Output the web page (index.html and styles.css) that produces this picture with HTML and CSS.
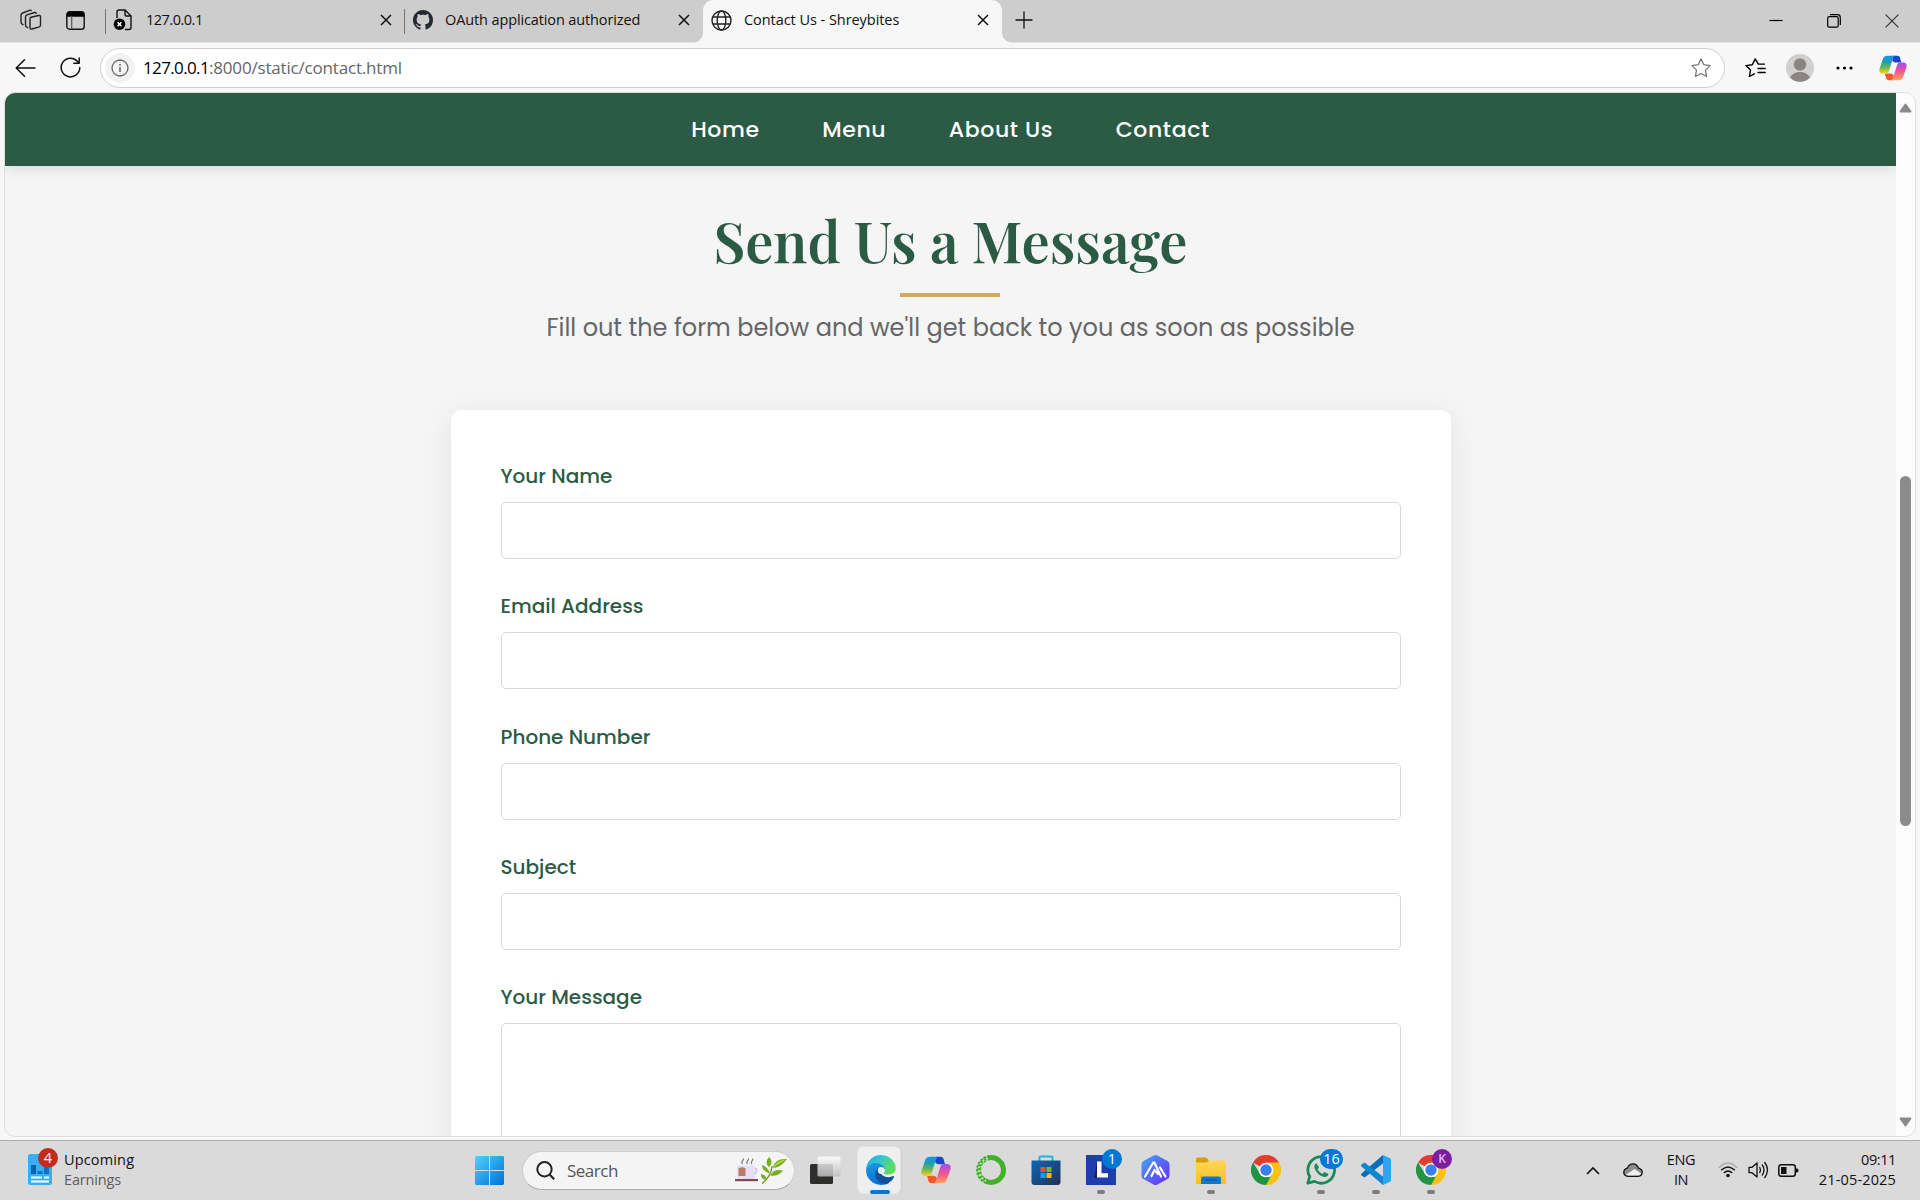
FILE: index.html
```html
<!DOCTYPE html>
<html lang="en">
<head>
<meta charset="utf-8">
<title>Contact Us - Shreybites</title>
<link rel="stylesheet" href="styles.css">
</head>
<body>
<svg class="defs" width="0" height="0" aria-hidden="true">
  <defs>
    <linearGradient id="copA" x1="0" y1="0" x2="0" y2="1"><stop offset="0" stop-color="#1593e8"/><stop offset=".35" stop-color="#1f9fb4"/><stop offset=".65" stop-color="#6db54f"/><stop offset="1" stop-color="#ffd21f"/></linearGradient>
    <linearGradient id="copB" x1="0" y1="0" x2="0" y2="1"><stop offset="0" stop-color="#a24ef0"/><stop offset=".5" stop-color="#ee5591"/><stop offset="1" stop-color="#ffa45c"/></linearGradient>
    <linearGradient id="edgeTop" x1="0" y1="0" x2="1" y2=".5"><stop offset="0" stop-color="#1f9fe8"/><stop offset=".45" stop-color="#34c6d3"/><stop offset="1" stop-color="#62dc57"/></linearGradient>
    <linearGradient id="edgeLeft" x1="0" y1="0" x2=".4" y2="1"><stop offset="0" stop-color="#1b9de2"/><stop offset="1" stop-color="#0a6fd0"/></linearGradient>
    <linearGradient id="win" gradientUnits="userSpaceOnUse" x1="0" y1="0" x2="29" y2="29"><stop offset="0" stop-color="#4fd1ff"/><stop offset="1" stop-color="#0070d6"/></linearGradient>
    <linearGradient id="store" x1="0" y1="0" x2="1" y2="1"><stop offset="0" stop-color="#0b68b4"/><stop offset="1" stop-color="#24305a"/></linearGradient>
    <linearGradient id="hex" x1="0" y1="0" x2="1" y2="1"><stop offset="0" stop-color="#45a5f4"/><stop offset="1" stop-color="#6a2bf0"/></linearGradient>
    <linearGradient id="folder" x1="0" y1="0" x2="0" y2="1"><stop offset="0" stop-color="#ffd75a"/><stop offset="1" stop-color="#fbbf1e"/></linearGradient>
    <linearGradient id="pane" x1="0" y1="0" x2="0" y2="1"><stop offset="0" stop-color="#fff"/><stop offset="1" stop-color="#bdbdbd"/></linearGradient>
    <symbol id="copilot" viewBox="0 0 30 28">
      <path fill="#1d44c8" d="M15 .8h4.400c2 0 2.800.9 3.300 2.600L24 8.200h-4.500c-3 0-5-.5-5.500-3Z"/>
      <path fill="#f4592c" d="M15 27.200h-4.400c-2 0-2.800-.9-3.300-2.600L6 19.800h4.500c3 0 5 .5 5.500 3Z"/>
      <path fill="url(#copA)" d="M9.500.8h8c-1.600.6-2.200 1.700-2.800 3.600l-4 12.600c-.8 2.400-2 3-3.900 3H4C.8 20-.3 17.800.6 14.600L3.800 5C4.700 2.200 6.300.8 9.500.8Z"/>
      <path fill="url(#copB)" d="M20.500 27.200h-8c1.600-.6 2.200-1.700 2.800-3.600l4-12.600c.8-2.400 2-3 3.900-3H26c3.200 0 4.300 2.200 3.400 5.400L26.200 23c-.9 2.800-2.500 4.200-5.700 4.200Z"/>
    </symbol>
    <symbol id="chrome" viewBox="0 0 30 30">
      <path fill="#e33b2e" d="M15 15 2 7.500A15 15 0 0 1 28 7.500Z"/>
      <path fill="#fbc116" d="M15 7.500h13A15 15 0 0 1 14.500 30L21 18Z"/>
      <path fill="#229342" d="M2 7.500 9 18.500 15 22h4.500L15 30A15 15 0 0 1 2 7.500Z"/>
      <circle cx="15" cy="15" r="7.300" fill="#fff"/><circle cx="15" cy="15" r="5.700" fill="#3b7ff0"/>
    </symbol>
    <symbol id="x" viewBox="0 0 12 12"><path d="M1 1l10 10M11 1 1 11" fill="none" stroke="currentColor" stroke-width="1.500"/></symbol>
  </defs>
</svg>

<header class="tabstrip">
  <svg class="ico-workspaces" width="22" height="22" viewBox="0 0 22 22" fill="none" stroke="#222" stroke-width="1.400" stroke-linejoin="round" stroke-linecap="round"><path d="M11 8.200 18.500 6.500q2-.4 2 1.500v8q0 1.300-1.200 1.800L12 20q-2 .6-2-1.500v-8.500q0-1.500 1-1.800Z"/><path d="M7.500 18.500q-2-.5-2-2.500V8q0-1.600 1.500-2.200L14.500 3.500q1.500-.3 1.700.8"/><path d="M3 15.700Q1 15 1 13V6.500Q1 4.700 2.500 4L9.500 1.300q1.300-.4 1.700.3"/></svg>
  <svg class="ico-vtabs" width="19" height="19" viewBox="0 0 19 19"><rect x=".8" y=".8" width="17.400" height="17.400" rx="2.800" fill="none" stroke="#111" stroke-width="1.400"/><path d="M.8 5.800V3.600Q.8.800 3.600.8h11.800q2.800 0 2.800 2.800v2.200Z" fill="#000"/><path d="M5.700 5v13" stroke="#555" stroke-width="1.200"/></svg>
  <div class="tab first">
    <svg width="20" height="22" viewBox="0 0 20 22"><path d="M4 9V3q0-2 2-2h6l6 6v11.500q0 2-2 2h-4M12 1v4.500Q12 7 13.500 7H18" fill="none" stroke="#111" stroke-width="1.400"/><circle cx="6.500" cy="15.200" r="5.800" fill="#000"/><path d="m4.600 13.300 3.800 3.800m0-3.800-3.800 3.800" stroke="#fff" stroke-width="1.500"/></svg>
    <span class="t1">127.0.0.1</span><svg class="close" width="12" height="12"><use href="#x"/></svg>
  </div>
  <div class="tab second">
    <svg width="20" height="20" viewBox="0 0 16 16" fill="#24292f"><path d="M8 0C3.580 0 0 3.580 0 8c0 3.540 2.290 6.530 5.470 7.590.4.070.55-.17.55-.38 0-.19-.01-.82-.01-1.490-2.010.37-2.530-.49-2.690-.94-.09-.23-.48-.94-.82-1.130-.28-.15-.68-.52-.01-.53.63-.01 1.080.58 1.230.82.72 1.210 1.870.87 2.330.66.07-.52.28-.87.51-1.070-1.780-.2-3.640-.89-3.640-3.950 0-.87.31-1.590.82-2.150-.08-.2-.36-1.020.08-2.120 0 0 .67-.21 2.200.82.64-.18 1.320-.27 2-.27s1.360.09 2 .27c1.530-1.040 2.200-.82 2.200-.82.44 1.100.16 1.920.08 2.120.51.56.82 1.270.82 2.150 0 3.070-1.870 3.750-3.650 3.950.29.25.54.73.54 1.480 0 1.070-.01 1.930-.01 2.200 0 .21.15.46.55.38A8.010 8.010 0 0 0 16 8c0-4.420-3.580-8-8-8Z"/></svg>
    <span class="t2">OAuth application authorized</span><svg class="close" width="12" height="12"><use href="#x"/></svg>
  </div>
  <div class="tab active">
    <svg width="21" height="21" viewBox="0 0 21 21" fill="none" stroke="#222" stroke-width="1.400"><circle cx="10.500" cy="10.500" r="9.500"/><ellipse cx="10.500" cy="10.500" rx="4.300" ry="9.500"/><path d="M2 7h17M2 14h17"/></svg>
    <span class="t3">Contact Us - Shreybites</span><svg class="close" width="12" height="12"><use href="#x"/></svg>
  </div>
  <svg class="plus" width="18" height="18" viewBox="0 0 18 18"><path d="M9 .5v17M.5 9h17" stroke="#111" stroke-width="1.300"/></svg>
  <div class="winctl">
    <svg width="14" height="14" viewBox="0 0 14 14"><path d="M.5 6.500h13" stroke="#000" stroke-width="1.200"/></svg>
    <svg width="14" height="14" viewBox="0 0 14 14" fill="none" stroke="#000" stroke-width="1.200"><rect x=".7" y="2.700" width="10.500" height="10.500" rx="1.500"/><path d="M3 .7h7.500Q13.300.7 13.300 3.500V11"/></svg>
    <svg width="14" height="14" viewBox="0 0 14 14"><path d="m.6.600 12.800 12.800M13.400.600.600 13.400" stroke="#333" stroke-width="1.200"/></svg>
  </div>
</header>

<div class="toolbar">
  <svg class="back" width="21" height="18" viewBox="0 0 21 18" fill="none" stroke="#111" stroke-width="1.500" stroke-linecap="round" stroke-linejoin="round"><path d="M20 9H1.200M9.500.8 1.200 9l8.300 8.200"/></svg>
  <svg class="reload" width="21" height="21" viewBox="0 0 21 21" fill="none" stroke="#111" stroke-width="1.500" stroke-linecap="round" stroke-linejoin="round"><path d="M19.800 10.500A9.300 9.300 0 1 1 17.300 4.200L19 6M19.200 1v5.200h-5.400"/></svg>
  <div class="address">
    <span class="info"><svg width="18" height="18" viewBox="0 0 18 18"><circle cx="9" cy="9" r="8" fill="none" stroke="#6b6b6b" stroke-width="1.300"/><path d="M9 8v5M9 5v1.700" stroke="#6b6b6b" stroke-width="1.600"/></svg></span>
    <span class="url"><b>127.0.0.1</b><i>:8000/static/contact.html</i></span>
    <svg class="star" width="20" height="20" viewBox="0 0 20 20" fill="none" stroke="#777" stroke-width="1.300" stroke-linejoin="round"><path d="m10 .9 2.800 5.800 6.300.9-4.600 4.500 1.100 6.400L10 15.500l-5.600 3 1.100-6.400L.9 7.600l6.300-.9Z"/></svg>
  </div>
  <svg class="favs" width="21" height="20" viewBox="0 0 21 20" fill="none" stroke="#000" stroke-width="1.400" stroke-linejoin="round" stroke-linecap="round"><path d="M19.500 6.100h-6.200L10.200.9 7.300 6.700l-6.400.9 4.600 4.500-1.100 6.400 5-2.700M13 10.500h7.200M13 14.500h7.200"/></svg>
  <svg class="avatar" width="28" height="28" viewBox="0 0 28 28"><circle cx="14" cy="14" r="14" fill="#d2d0ce"/><circle cx="14" cy="10.500" r="6.200" fill="#8a8583"/><path d="M4 23.500q3-5.500 10-5.500t10 5.500A14 14 0 0 1 4 23.500Z" fill="#8a8583"/></svg>
  <svg class="dots" width="17" height="4" viewBox="0 0 17 4"><circle cx="2" cy="2" r="1.600"/><circle cx="8.500" cy="2" r="1.600"/><circle cx="15" cy="2" r="1.600"/></svg>
  <svg class="cop" width="28" height="26"><use href="#copilot"/></svg>
</div>

<div class="frame">
  <div class="page">
    <nav class="sitenav"><a>Home</a><a>Menu</a><a>About Us</a><a>Contact</a></nav>
    <main>
      <h1>Send Us a Message</h1>
      <div class="rule"></div>
      <p>Fill out the form below and we'll get back to you as soon as possible</p>
      <form class="card">
        <div class="field"><label>Your Name</label><div class="input"></div></div>
        <div class="field"><label>Email Address</label><div class="input"></div></div>
        <div class="field"><label>Phone Number</label><div class="input"></div></div>
        <div class="field"><label>Subject</label><div class="input"></div></div>
        <div class="field"><label>Your Message</label><div class="input area"></div></div>
      </form>
    </main>
  </div>
  <div class="scrollbar">
    <svg width="13" height="10" viewBox="0 0 13 10"><path d="M6.500 1.500 11.500 8.500h-10Z" fill="#8a8a8a" stroke="#8a8a8a" stroke-width="2" stroke-linejoin="round"/></svg>
    <div class="thumb"></div>
    <svg width="13" height="10" viewBox="0 0 13 10"><path d="M6.500 8.500 11.500 1.500h-10Z" fill="#8a8a8a" stroke="#8a8a8a" stroke-width="2" stroke-linejoin="round"/></svg>
  </div>
</div>

<footer class="taskbar">
  <div class="widget">
    <div class="wicon">
      <svg width="24" height="31" viewBox="0 0 24 31"><rect width="24" height="31" rx="2.500" fill="#35b0f0"/><path d="M3 11h5v9H3Z" fill="#0b5fb4"/><path d="M9.500 17h5v3h-5ZM16 12h5v8h-5Z" fill="#1470c4"/><path d="M3 23.500h11M16 23.500h5M3 27.500h18" stroke="#fff" stroke-width="2"/></svg>
      <span class="badge red">4</span>
    </div>
    <div class="wtext"><span class="up">Upcoming</span><span class="earn">Earnings</span></div>
  </div>
  <svg class="start" width="29" height="29" viewBox="0 0 29 29" fill="url(#win)"><path d="M1 0h13v14H0V1ZM15 0h13l1 1v13H15ZM0 15h14v14H1l-1-1ZM15 15h14v13l-1 1H15Z"/></svg>
  <div class="search">
    <svg width="19" height="19" viewBox="0 0 19 19" fill="none" stroke="#222" stroke-width="2"><circle cx="8.500" cy="8.300" r="7.200"/><path d="m13.300 13.300 4.900 4.900"/></svg>
    <span>Search</span>
    <svg class="tea" width="53" height="27" viewBox="0 0 53 27">
      <path d="M7.500 7q-1.500-1.500 0-3t.5-2.500M12.500 7q-1.500-1.500 0-3t.5-2.500M17 7q-1.500-1.500 0-3t.5-2.500" fill="none" stroke="#777" stroke-width="1.100"/>
      <path d="M19 11.500h2q2 3-2 6" fill="none" stroke="#c9bfe6" stroke-width="1.500"/>
      <path d="M2 8.500h18v10.500q0 3.500-3.500 3.500h-11Q2 22.500 2 19Z" fill="#e5def5"/><path d="M3.500 11.500q3.500-2.500 7 0V19h-7Z" fill="#b77a62"/>
      <path d="M0 22h23v2.200H0Z" fill="#7d4a4e"/>
      <path d="M27 26.500Q36 20 37 9" fill="none" stroke="#6c9a25" stroke-width="1.400"/>
      <path fill="#76ae22" d="M34 0q-5 6 0 10 5-5 0-10ZM27 8q0 6 7.500 8.500-1-6.500-7.500-8.500ZM52 2q-12-1-14.500 9 8 0 14.500-9ZM48 13.500q-9-2-13 5 8 1.500 13-5ZM26 17q-.5 5.500 5.500 5.500 0-4.500-5.500-5.500Z"/>
      <path d="M51 2.500Q42 3 37.500 11q6.500-4.500 13.500-8.500Z" fill="#c1d544"/>
    </svg>
  </div>
  <div class="apps">
    <div class="slot"><svg width="31" height="29" viewBox="0 0 31 29"><rect y="8" width="23" height="20" rx="1.500" fill="#2e2e2c"/><rect x="7.500" y=".5" width="23" height="20" rx="1.500" fill="url(#pane)" fill-opacity=".85"/></svg></div>
    <div class="slot open">
      <div class="under"></div>
      <div class="tile"><svg width="30" height="30" viewBox="0 0 30 30">
        <path fill="url(#edgeLeft)" d="M0 15Q1 7.500 10 7.500q9 .5 9 6.500l-5 6 9 8.200Q20 30 15 30A15 15 0 0 1 0 15Z"/>
        <path fill="#134f9b" d="M12.500 12.500Q7 18 10.500 24q3.500 5.500 9.500 5 6-2 8.200-7.300-.7-1-1.700-.4-5.500 2.200-9.800-.8-3.200-2.600-1.700-6Z"/>
        <path fill="url(#edgeTop)" d="M0 15A15 15 0 0 1 15 0q10 .3 14 9 3 10-6.500 10.500-5.500 0-4.300-2.300 2.300-3-1-6.500Q13.500 7.300 8.500 8 2.500 9 0 15Z"/>
        <circle cx="15.200" cy="15.500" r="3.400" fill="#e6f1f5"/>
      </svg></div>
      <div class="pill blue"></div>
    </div>
    <div class="slot"><svg width="30" height="28"><use href="#copilot"/></svg></div>
    <div class="slot"><svg width="30" height="30" viewBox="0 0 30 30" fill="none"><circle cx="15" cy="15" r="12.500" stroke="#43b02a" stroke-width="5"/><path d="M12 3.400A12 12 0 0 0 10 26" stroke="#dadada" stroke-width="1.800" stroke-dasharray="2 2"/><path d="M11 1.200A14.300 14.300 0 0 0 8.500 27.800M11.500 5.500A10.500 10.500 0 0 0 8 22.500" stroke="#dadada" stroke-width="1.500" stroke-dasharray="1.500 2.500"/></svg></div>
    <div class="slot"><svg width="30" height="30" viewBox="0 0 30 30"><path d="M8.500 7V2.500Q8.500 1.500 9.500 1.500h11q1 0 1 1V7" fill="none" stroke="#1bb2ee" stroke-width="2"/><path d="M.500 5.500h29V27q0 3-3 3h-23q-3 0-3-3Z" fill="url(#store)"/><path d="M9.500 12H14.500v5h-5Z" fill="#f25022"/><path d="M15.500 12h5v5h-5Z" fill="#7fba00"/><path d="M9.500 18h5v5h-5Z" fill="#00a4ef"/><path d="M15.500 18h5v5h-5Z" fill="#ffb900"/></svg></div>
    <div class="slot"><svg width="30" height="30" viewBox="0 0 30 30"><path fill="#1f3eae" d="M0 0h30v30H0Z"/><path d="M8 23 11 6.500V18l3 4.500Z" fill="#0d2560"/><path d="M11 6.500h4.500v11.800H22v4.200H11Z" fill="#fff"/></svg><span class="badge blue">1</span><div class="pill"></div></div>
    <div class="slot"><svg width="29" height="30" viewBox="0 0 29 30"><path d="M12.500.500q2-1 4 0l10 5.500q2 1 2 3.500v11q0 2.500-2 3.500l-10 5.500q-2 1-4 0l-10-5.500q-2-1-2-3.500v-11Q.500 7 2.500 6Z" fill="url(#hex)"/><path d="m4 21.500 8-13.500q.8-1.200 1.600 0l6.400 13.500M10.500 21l3-6 3.500 4M19 12.500l5.500 9" fill="none" stroke="#fff" stroke-width="2.200" stroke-linecap="round" stroke-linejoin="round"/></svg></div>
    <div class="slot"><svg width="30" height="27" viewBox="0 0 30 27"><path d="M0 8V2Q0 .500 1.500.500H10L13 3.500V8Z" fill="#dc9a0c"/><path d="M0 5.500h10.500L13.500 3.500H30V27H0Z" fill="url(#folder)"/><path d="M5 27v-5.500q0-2 2-2h16q2 0 2 2V27Z" fill="#1478c8"/><path d="M9 23h12" stroke="#0b4e8e" stroke-width="1"/></svg><div class="pill"></div></div>
    <div class="slot"><svg width="30" height="30"><use href="#chrome"/></svg></div>
    <div class="slot"><svg width="30" height="30" viewBox="0 0 30 30"><path d="M1.800 28.200 3.700 21.500A13.300 13.300 0 1 1 8.600 26.400Z" fill="none" stroke="#1c8a55" stroke-width="2.800" stroke-linejoin="round"/><path d="M10.500 8.200q-2.800 1.500-2 4.800 2.500 7 9.500 9 3.800.5 4.500-3l-4-2-2 1.900q-3.400-1.400-5-4.700L13 12.500Z" fill="#1c8a55"/></svg><span class="badge blue wide">16</span><div class="pill"></div></div>
    <div class="slot"><svg width="30" height="30" viewBox="0 0 30 30"><path d="M22 0v8.500L3.500 22.500.5 20.500q-.8-1 0-2Z" fill="#0a6fb8"/><path d="M22 30v-8.500L3.500 7.500.5 9.500q-.8 1 0 2Z" fill="#0f86d2"/><path d="m22 0 7 3.200q1 .6 1 1.600v20.400q0 1-1 1.600L22 30Z" fill="#2aa5f2"/></svg><div class="pill"></div></div>
    <div class="slot"><svg width="30" height="30"><use href="#chrome"/></svg><span class="badge purple">K</span><div class="pill"></div></div>
  </div>
  <div class="tray">
    <svg class="chev" width="14" height="9" viewBox="0 0 14 9"><path d="m1 8 6-6 6 6" fill="none" stroke="#111" stroke-width="1.600"/></svg>
    <svg class="cloud" width="20" height="14" viewBox="0 0 20 14"><path d="M5 13.300Q.8 13 .8 9.300.800 6 4.300 5.200 6 .8 10 .8t5.500 4.400Q19.200 6 19.200 9.300q0 4-4.200 4Z" fill="#8d8d8d"/><path d="M2.500 12 11.500 6l6.800 4.500-2.300 2.200H4Z" fill="#eee"/><path d="M5 13.300Q.8 13 .8 9.300.800 6 4.300 5.200 6 .8 10 .8t5.500 4.400Q19.200 6 19.200 9.300q0 4-4.200 4Z" fill="none" stroke="#111" stroke-width="1.300"/></svg>
    <div class="lang"><span>ENG</span><span>IN</span></div>
    <svg class="wifi" width="20" height="16" viewBox="0 0 20 16" fill="none" stroke="#111" stroke-width="1.400"><path d="M.7 6Q10-4 19.300 6" stroke="#aaa"/><path d="M3.200 8.300q6.800-6.800 13.600 0M5.800 11q4.200-4 8.400 0"/><circle cx="10" cy="13.500" r="1.800" fill="#111" stroke="none"/></svg>
    <svg class="vol" width="21" height="18" viewBox="0 0 21 18" fill="none" stroke="#111" stroke-width="1.300" stroke-linejoin="round"><path d="M1 6.300h3L9 2v14l-5-4.300H1ZM11.500 6q1.800 3 0 6M14 3.500q4 5.500 0 11M16.500 1q6 8 0 16"/></svg>
    <svg class="bat" width="21" height="13" viewBox="0 0 21 13"><rect x=".8" y=".8" width="16.500" height="11.400" rx="2.500" fill="none" stroke="#111" stroke-width="1.500"/><path d="M3 3h5.500v7H3ZM18 4.500h1q1.500 0 1.500 2t-1.500 2h-1Z" fill="#111"/></svg>
    <div class="clock"><span class="hm">09:11</span><span class="date">21-05-2025</span></div>
  </div>
</footer>
</body>
</html>
```
FILE: styles.css
```css
*{box-sizing:border-box}
body{margin:0;width:1920px;height:1200px;overflow:hidden;display:flex;flex-direction:column;background:#f7f7f7;font-family:"Segoe UI","Open Sans",sans-serif;font-size:14.5px;color:#111}
svg{display:block;flex:none}
.defs{position:absolute}

/* Tab strip */
.tabstrip{height:43px;flex:none;display:flex;align-items:flex-start;background:#cdcdcd;border-bottom:1px solid #e2e2e2}
.ico-workspaces{margin:9px 0 0 20px}
.ico-vtabs{margin:11px 0 0 24px}
.tab{height:43px;display:flex;align-items:center;padding-bottom:3px;position:relative;white-space:nowrap}
.tab span{padding-bottom:1px}
.tab .close{margin-left:auto;color:#111}
.tab.first{width:299px;margin-left:20px;padding-left:8px;padding-right:12px}
.tab.first span{margin-left:13px}
.tab.second{width:299px;padding-left:9px;padding-right:13px}
.tab.second span{margin-left:12px}
.tab.first::before,.tab.second::before{content:"";position:absolute;left:0;top:9px;width:1px;height:25px;background:#777}
.tab.active{width:299px;padding-left:8px;padding-right:13px;background:#f7f7f7;border-radius:10px 10px 0 0}
.tab.active span{margin-left:12px}
.tab.active::before,.tab.active::after{content:"";position:absolute;bottom:0;width:10px;height:10px}
.tab.active::before{left:-10px;background:radial-gradient(circle at 0 0,transparent 9.500px,#f7f7f7 10px)}
.tab.active::after{right:-10px;background:radial-gradient(circle at 100% 0,transparent 9.500px,#f7f7f7 10px)}
.t1{letter-spacing:-.5px}
.t2{letter-spacing:-.12px}
.t3{letter-spacing:-.05px}
.plus{margin:11px 0 0 13px}
.winctl{margin:14px 21px 0 auto;display:flex;gap:44px}

/* Address toolbar */
.toolbar{height:49px;flex:none;display:flex;align-items:center;padding-top:1px;background:#f7f7f7}
.back{margin:0 0 1px 15px}
.reload{margin:0 0 1px 24px}
.address{width:1625px;height:40px;margin-left:19px;border:1px solid #cfcfcf;border-radius:20px;background:#fff;display:flex;align-items:center}
.info{width:30px;height:30px;margin-left:4px;border-radius:50%;background:#f2f2f2;display:flex;align-items:center;justify-content:center}
.url{margin-left:8px;padding-bottom:2px;font-size:17px;white-space:nowrap}
.url b{font-weight:400;color:#000;letter-spacing:-.64px}
.url i{font-style:normal;color:#666;letter-spacing:-.18px}
.star{margin:0 13px 0 auto}
.favs{margin-left:20px}
.avatar{margin-left:20px}
.dots{margin-left:22px}
.cop{margin-left:26px}

/* Web page viewport */
.frame{width:1912px;height:1045px;margin-left:4px;flex:none;display:flex;border:1px solid #dedede;border-radius:11px;overflow:hidden;background:#f5f5f5}
.page{width:1891px;flex:none;overflow:hidden;font-family:Poppins,Inter,sans-serif}
.sitenav{height:73px;display:flex;justify-content:center;align-items:center;gap:62.500px;background:#2b5b45;color:#fff;font-size:22px;font-weight:500;letter-spacing:.625px;box-shadow:0 3px 14px rgba(0,0,0,.1);position:relative}
main{display:flex;flex-direction:column;align-items:center}
h1{margin:36px 0 0;height:91px;line-height:75px;font-family:"Playfair Display","Liberation Serif",serif;font-weight:600;font-size:56px;color:#2b5b45;white-space:nowrap}
.rule{width:100px;height:4px;margin-right:1px;background:#d4a762}
p{margin:11px 0 0;height:40px;line-height:39px;font-size:24px;color:#666;white-space:nowrap}
.card{width:1000px;height:1000px;margin:62px 0 0;padding:50px;background:#fff;border-radius:10px;box-shadow:0 6px 32px rgba(0,0,0,.08)}
.field{height:130.300px;display:flex;flex-direction:column}
label{height:42px;flex:none;line-height:33px;font-size:20px;font-weight:500;color:#2b5b45}
.input{height:57px;border:1px solid #d9d9d9;border-radius:5px;background:#fff}
.input.area{height:190px;flex:none}
.scrollbar{width:19px;flex:none;background:#fcfcfc;display:flex;flex-direction:column;align-items:center;padding:10px 0 9px}
.thumb{width:11px;height:350px;margin:363px 0 auto;border-radius:6px;background:#8b8b8b}

/* Taskbar */
.taskbar{height:60px;margin-top:3px;flex:none;display:flex;align-items:center;padding-bottom:1px;background:#dadada;border-top:1px solid #ababab}
.widget{width:447px;display:flex;padding-left:28px}
.wicon{width:24px;margin-top:4px;position:relative}
.wtext{margin-left:12px;display:flex;flex-direction:column;line-height:20px}
.up{letter-spacing:.15px}
.earn{color:#5c5c5c;letter-spacing:-.15px}
.start{margin-left:28px}
.search{width:273px;height:39px;margin-left:18px;padding:0 6px 0 13px;display:flex;align-items:center;border-radius:20px;background:#f4f4f4;border:1px solid #ccc;border-bottom-color:#aaa}
.search span{margin-left:12px;font-size:17px;letter-spacing:-.5px;color:#555}
.tea{margin-left:auto}
.apps{height:58px;margin-left:3px;display:flex}
.slot{width:55px;display:flex;align-items:center;justify-content:center;position:relative}
.tile{width:44px;height:48px;position:relative;display:flex;align-items:center;justify-content:center;background:#efefef;border:1px solid #e3e3e3;border-radius:6px;margin-right:5px;left:1px}
.tile svg{margin-left:3px}
.under{position:absolute;left:12px;top:5px;width:37px;height:48px;border-radius:6px;background:#e9e9e9;border:1px solid #d0d0d0}
.pill{position:absolute;bottom:5px;left:24px;width:8px;height:4px;border-radius:2px;background:#7d7d7d}
.pill.blue{left:17px;width:20px;background:#0078d4}
.badge{position:absolute;height:20px;min-width:20px;border-radius:10px;line-height:20px;text-align:center;color:#fff;font-size:14.500px}
.badge.red{left:10px;top:-6px;background:#c42b1c}
.badge.blue{left:29px;top:8px;background:#0078d4}
.badge.blue.wide{left:27px;width:23px}
.badge.purple{left:29px;top:8px;background:#7b1fa2;color:#e2b8ee;font-size:12px;font-weight:600}
.tray{margin-left:auto;padding-right:24px;display:flex;align-items:center}
.cloud{margin-left:23px}
.lang{width:40px;margin-left:18px;text-align:center;display:flex;flex-direction:column;line-height:20px;letter-spacing:-.4px}
.wifi{margin-left:17px}
.vol{margin-left:10px}
.bat{margin-left:9px}
.clock{width:97px;text-align:right;display:flex;flex-direction:column;line-height:20px;white-space:nowrap}
.hm{letter-spacing:-.4px}
.date{letter-spacing:.15px}
```
